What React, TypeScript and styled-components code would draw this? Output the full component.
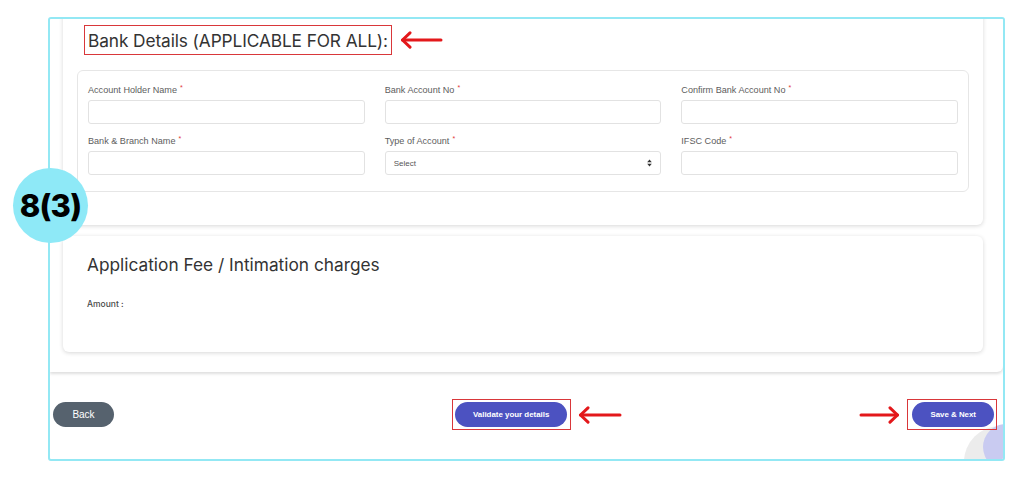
import React from 'react';
import styled, { createGlobalStyle } from 'styled-components';

const GlobalStyle = createGlobalStyle`
  html, body {
    margin: 0;
    padding: 0;
    background: #fff;
  }
  body {
    font-family: 'Liberation Sans', Arial, sans-serif;
  }
`;

const Page = styled.div`
  position: relative;
  width: 1024px;
  height: 478px;
  padding: 17px 0 0 48px;
  box-sizing: border-box;
  overflow: hidden;
`;

const Frame = styled.div`
  position: relative;
  width: 957px;
  height: 444px;
  box-sizing: border-box;
  border: 2px solid #93e8f4;
  border-radius: 3px;
  overflow: hidden;
  display: flex;
  flex-direction: column;
`;

const Panel = styled.div`
  position: relative;
  z-index: 1;
  margin-top: -12px;
  padding: 0 20px 20px 13px;
  background: #fff;
  border-bottom-right-radius: 6px;
  box-shadow: 0 2px 3px rgba(0, 0, 0, 0.13);
  display: flex;
  flex-direction: column;
  gap: 11px;
`;

const Card = styled.section<{ $pad: string }>`
  background: #fff;
  border-radius: 6px;
  box-shadow: 0 1px 4px rgba(0, 0, 0, 0.16);
  padding: ${(p) => p.$pad};
`;

const HeadingRow = styled.div`
  display: flex;
  align-items: center;
  gap: 8px;
  margin: 0 0 15px 7px;
`;

const Highlight = styled.div`
  border: 1px solid #d9373a;
  height: 30px;
  box-sizing: border-box;
  display: flex;
  align-items: center;
  padding: 0 3px 0 3px;
`;

const Title = styled.h2`
  margin: 0;
  font-family: Inter, 'Noto Sans', sans-serif;
  font-weight: 400;
  font-size: 17.3px;
  letter-spacing: -0.1px;
  color: #333;
  white-space: nowrap;
`;

const FieldBox = styled.div`
  border: 1px solid #e6e6e6;
  border-radius: 6px;
  padding: 12px 10px 16px;
  display: grid;
  grid-template-columns: repeat(3, 1fr);
  column-gap: 20px;
  row-gap: 10px;
`;

const Field = styled.div`
  display: flex;
  flex-direction: column;
  gap: 3px;
`;

const Label = styled.label`
  font-size: 9.1px;
  line-height: 14px;
  color: #5d5d5d;
  white-space: nowrap;
`;

const Req = styled.sup`
  color: #e2383a;
  font-size: 7px;
  margin-left: 3px;
  vertical-align: 3px;
  line-height: 0;
`;

const Input = styled.div`
  height: 24px;
  box-sizing: border-box;
  border: 1px solid #e2e2e2;
  border-radius: 3px;
  background: #fff;
  display: flex;
  align-items: center;
  justify-content: space-between;
  padding: 0 8px;
  font-size: 8px;
  color: #555;
`;

const SubTitle = styled.h3`
  margin: 0 0 21px;
  font-family: Inter, 'Noto Sans', sans-serif;
  font-weight: 400;
  font-size: 17.3px;
  line-height: 22px;
  color: #333;
`;

const Amount = styled.div`
  font-family: Inter, 'Noto Sans', sans-serif;
  font-size: 8.5px;
  line-height: 14px;
  font-weight: 500;
  color: #4a4a4a;
`;

const Footer = styled.div`
  position: relative;
  z-index: 1;
  display: flex;
  align-items: center;
  padding: 27px 6px 0 3px;
  height: 31px;
`;

const Group = styled.div<{ $ml?: string }>`
  display: flex;
  align-items: center;
  gap: 7px;
  margin-left: ${(p) => p.$ml || '0'};
`;

const Boxed = styled.div<{ $pad: string }>`
  border: 1px solid #d9373a;
  padding: ${(p) => p.$pad};
  display: flex;
`;

const Button = styled.button<{ $tone: 'slate' | 'indigo' }>`
  height: 25px;
  border: none;
  border-radius: 13px;
  padding: 0 18px;
  background: ${(p) => (p.$tone === 'slate' ? '#56626e' : '#4c52c1')};
  color: #fff;
  font-family: 'Liberation Sans', Arial, sans-serif;
  font-size: ${(p) => (p.$tone === 'slate' ? '10px' : '7.9px')};
  font-weight: ${(p) => (p.$tone === 'slate' ? 400 : 700)};
  white-space: nowrap;
  cursor: pointer;
`;

const BackButton = styled(Button)`
  width: 61px;
  padding: 0;
`;

const Blob = styled.div<{ $size: number; $color: string }>`
  position: absolute;
  width: ${(p) => p.$size}px;
  height: ${(p) => p.$size}px;
  border-radius: 50%;
  background: ${(p) => p.$color};
`;

const GreyBlob = styled(Blob)`
  left: 914px;
  top: 407px;
`;

const LavenderBlob = styled(Blob)`
  left: 933px;
  top: 405px;
`;

const StepBadge = styled.div`
  position: absolute;
  left: 13px;
  top: 168px;
  width: 75px;
  height: 75px;
  border-radius: 50%;
  background: #8ee9f7;
  display: flex;
  align-items: center;
  justify-content: center;
  font-family: Inter, 'Noto Sans', sans-serif;
  font-weight: 800;
  font-size: 31px;
  letter-spacing: -0.8px;
  color: #000;
  z-index: 5;
`;

const Arrow = ({ dir, width }: { dir: 'left' | 'right'; width: number }) => (
  <svg width={width} height={18} viewBox={`0 0 ${width} 18`}>
    <g fill="none" stroke="#e3181b" strokeWidth={3} strokeLinecap="round" strokeLinejoin="round">
      {dir === 'left' ? (
        <>
          <line x1={2.5} y1={9} x2={width - 2} y2={9} />
          <polyline points="10,1.8 2.5,9 10,16.2" />
        </>
      ) : (
        <>
          <line x1={2} y1={9} x2={width - 2.5} y2={9} />
          <polyline points={`${width - 10},1.8 ${width - 2.5},9 ${width - 10},16.2`} />
        </>
      )}
    </g>
  </svg>
);

const SortIcon = () => (
  <svg width={5} height={8} viewBox="0 0 5 8">
    <polygon points="2.5,0.5 4.8,3.2 0.2,3.2" fill="#333" />
    <polygon points="2.5,7.5 4.8,4.8 0.2,4.8" fill="#333" />
  </svg>
);

const fields = [
  { label: 'Account Holder Name' },
  { label: 'Bank Account No' },
  { label: 'Confirm Bank Account No' },
  { label: 'Bank & Branch Name' },
  { label: 'Type of Account', select: true },
  { label: 'IFSC Code' },
];

export default function App() {
  return (
    <>
      <GlobalStyle />
      <Page>
        <Frame>
          <Panel>
            <Card $pad="18px 14px 33px">
              <HeadingRow>
                <Highlight>
                  <Title>Bank Details (APPLICABLE FOR ALL):</Title>
                </Highlight>
                <Arrow dir="left" width={43} />
              </HeadingRow>
              <FieldBox>
                {fields.map((f) => (
                  <Field key={f.label}>
                    <Label>
                      {f.label}
                      <Req>*</Req>
                    </Label>
                    <Input>
                      {f.select ? (
                        <>
                          <span>Select</span>
                          <SortIcon />
                        </>
                      ) : null}
                    </Input>
                  </Field>
                ))}
              </FieldBox>
            </Card>
            <Card $pad="18px 24px 41px">
              <SubTitle>Application Fee / Intimation charges</SubTitle>
              <Amount>Amount :</Amount>
            </Card>
          </Panel>
          <Footer>
            <BackButton $tone="slate">Back</BackButton>
            <Group $ml="338px">
              <Boxed $pad="2px 3px 2px 2px">
                <Button $tone="indigo">Validate your details</Button>
              </Boxed>
              <Arrow dir="left" width={44} />
            </Group>
            <Group $ml="auto">
              <Arrow dir="right" width={41} />
              <Boxed $pad="2px 2px 2px 4px">
                <Button $tone="indigo">Save &amp; Next</Button>
              </Boxed>
            </Group>
          </Footer>
          <GreyBlob $size={72} $color="#ececec" />
          <LavenderBlob $size={46} $color="#c9cbf1" />
        </Frame>
        <StepBadge>8(3)</StepBadge>
      </Page>
    </>
  );
}
